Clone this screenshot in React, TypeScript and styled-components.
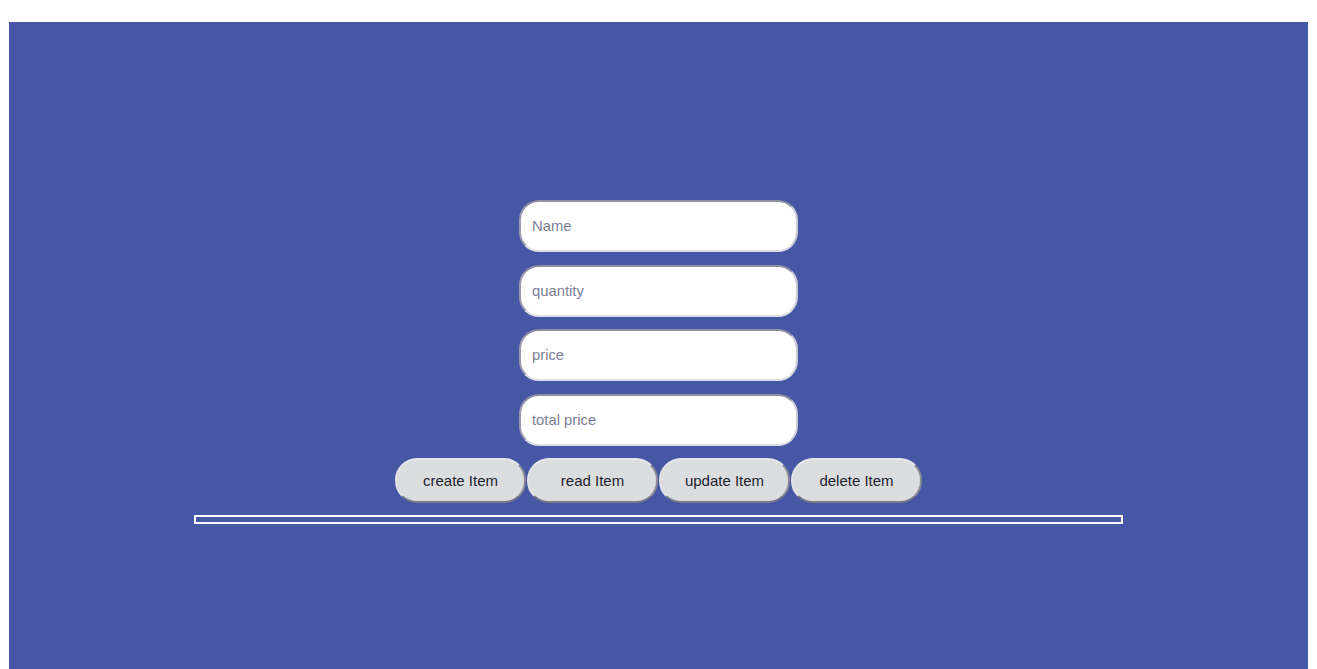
import React from "react"
import styled, { createGlobalStyle } from "styled-components"

const GlobalStyle = createGlobalStyle`
  html, body {
    margin: 0;
    padding: 0;
    background: #ffffff;
  }
  body {
    padding: 22px 9px 0 9px;
    font-family: "Liberation Sans", Arial, sans-serif;
  }
`

const Page = styled.main`
  background: #4657a5;
  min-height: 647px;
  padding-top: 178px;
  box-sizing: border-box;
  display: flex;
  flex-direction: column;
  align-items: center;
`

const Form = styled.form`
  display: flex;
  flex-direction: column;
  align-items: center;
  gap: 12.5px;
`

const Field = styled.input`
  box-sizing: border-box;
  width: 279px;
  height: 52px;
  padding: 0 11px;
  border: 2px solid;
  border-color: #8e90a2 #c9cad4 #dcdde4 #9a9cac;
  border-radius: 20px;
  background: #ffffff;
  font-family: "Liberation Sans", Arial, sans-serif;
  font-size: 14.8px;
  color: #222;
  outline: none;
  &::placeholder {
    color: #7b7e94;
    opacity: 1;
  }
`

const Actions = styled.div`
  display: flex;
  gap: 1px;
`

const ActionButton = styled.button`
  box-sizing: border-box;
  width: 131px;
  height: 45px;
  border: 2px solid;
  border-color: #e6e6ea #8a8b96 #7a7b88 #e2e2e6;
  border-radius: 22px;
  background: #dcdddf;
  color: #1d1f2e;
  font-family: "Liberation Sans", Arial, sans-serif;
  font-size: 15px;
  cursor: pointer;
`

const ItemTable = styled.div`
  box-sizing: border-box;
  width: 929px;
  height: 9px;
  margin-top: 12px;
  border: 2px solid #ffffff;
`

export default function App() {
  return (
    <>
      <GlobalStyle />
      <Page>
        <Form onSubmit={(e) => e.preventDefault()}>
          <Field placeholder="Name" />
          <Field placeholder="quantity" />
          <Field placeholder="price" />
          <Field placeholder="total price" />
          <Actions>
            <ActionButton type="button">create Item</ActionButton>
            <ActionButton type="button">read Item</ActionButton>
            <ActionButton type="button">update Item</ActionButton>
            <ActionButton type="button">delete Item</ActionButton>
          </Actions>
        </Form>
        <ItemTable />
      </Page>
    </>
  )
}
